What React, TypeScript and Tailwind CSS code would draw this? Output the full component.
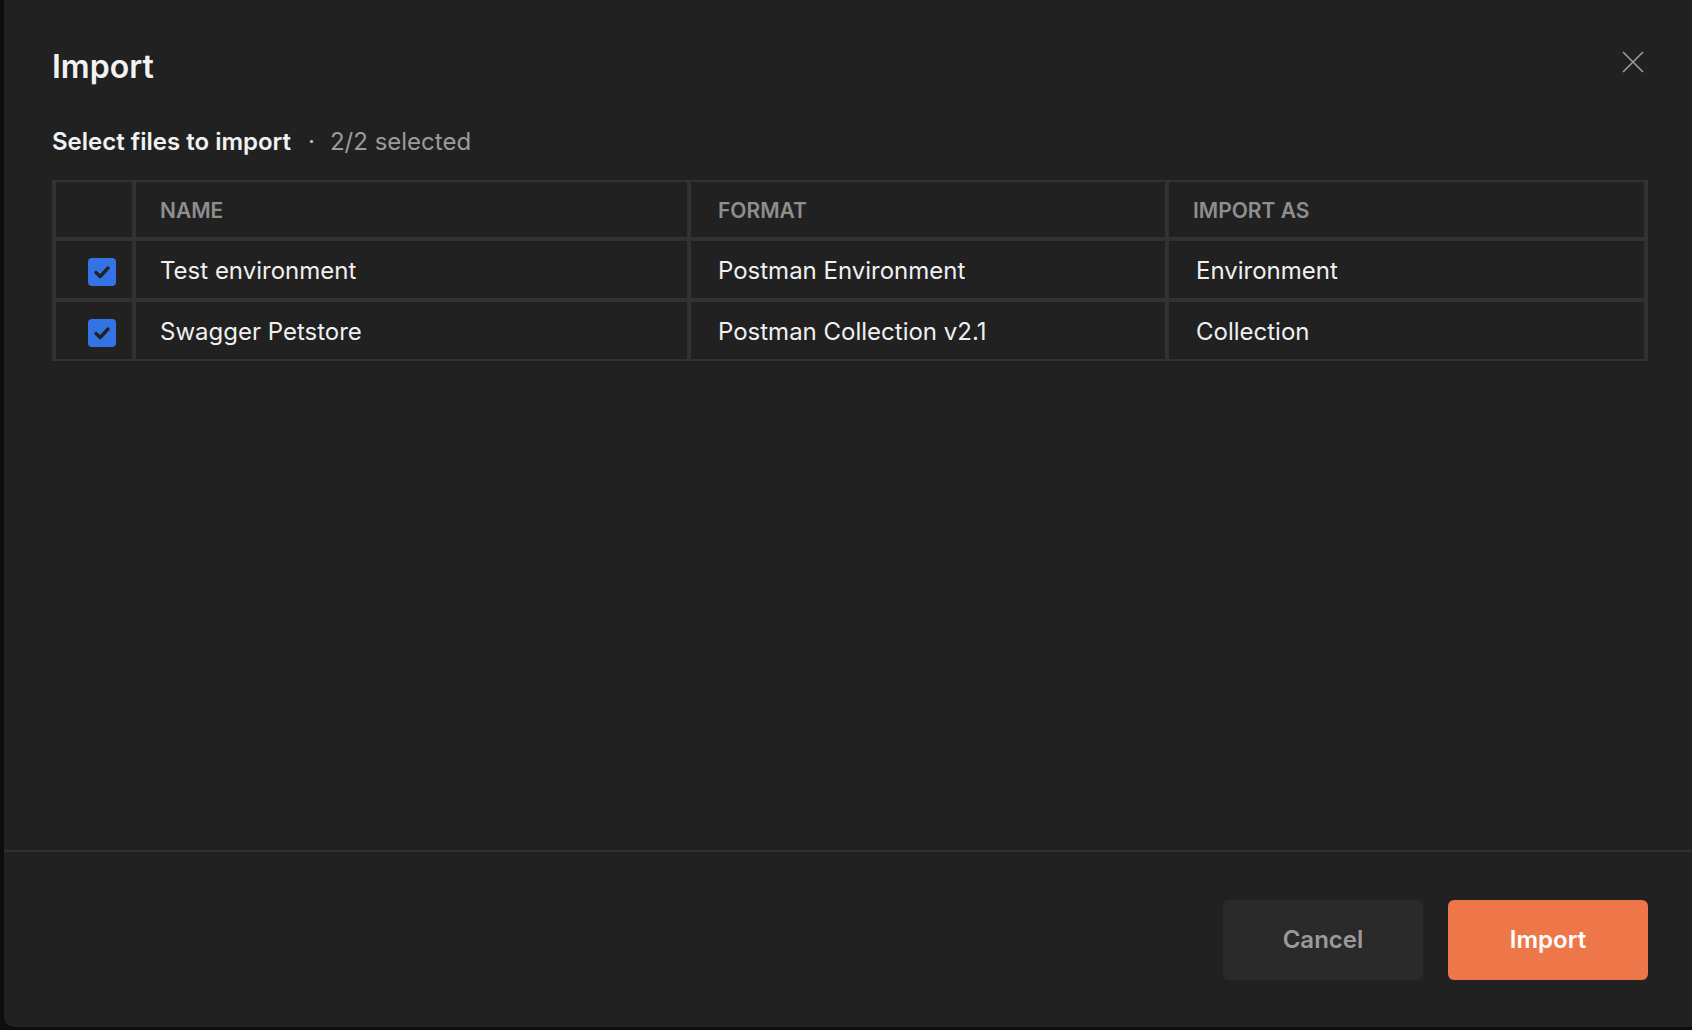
import React from "react";

const FILES = [
  { name: "Test environment", format: "Postman Environment", importAs: "Environment" },
  { name: "Swagger Petstore", format: "Postman Collection v2.1", importAs: "Collection" },
];

function CheckBox() {
  return (
    <div className="w-[28px] h-[28px] rounded-[4px] bg-[#3473e6] flex items-center justify-center">
      <svg width="22" height="22" viewBox="0 0 22 22" fill="none">
        <path
          d="M5 11.5 L9.2 15.5 L17 7"
          stroke="#222222"
          strokeWidth="3.4"
          strokeLinecap="round"
          strokeLinejoin="round"
        />
      </svg>
    </div>
  );
}

function CloseIcon() {
  return (
    <svg width="22" height="22" viewBox="0 0 22 22" fill="none">
      <path d="M1 1 L21 21 M21 1 L1 21" stroke="#9c9c9c" strokeWidth="1.6" />
    </svg>
  );
}

export default function App() {
  return (
    <div
      className="w-full h-[1030px] bg-[#0d0d0d] overflow-hidden"
      style={{ fontFamily: "Inter, 'Noto Sans', sans-serif" }}
    >
      <div className="ml-[4px] h-[1027px] bg-[#212121] rounded-bl-[10px] flex flex-col">
        {/* Body */}
        <div className="flex-1 pl-[48px] pr-[44px] pt-[47px]">
          <div className="flex items-start justify-between">
            <h1 className="text-[32px] leading-[40px] font-semibold text-[#f2f2f2]">Import</h1>
            <button className="mt-[4px] mr-[4px]" aria-label="Close">
              <CloseIcon />
            </button>
          </div>

          <div className="mt-[39px] flex items-center text-[24px] leading-[32px]">
            <span className="font-semibold text-[#f2f2f2]">Select files to import</span>
            <span className="ml-[17px] mr-[15px] text-[#bdbdbd]">·</span>
            <span className="text-[#9b9b9b]">2/2 selected</span>
          </div>

          {/* Table */}
          <div className="mt-[22px] bg-[#323232] px-[4px] py-[2px] grid grid-cols-[76px_551px_474px_1fr] gap-[4px]">
            <div className="bg-[#212121] h-[55px]" />
            <div className="bg-[#212121] h-[55px] pl-[24px] pt-[2px] flex items-center text-[21px] font-semibold text-[#8e8e8e]">
              NAME
            </div>
            <div className="bg-[#212121] h-[55px] pl-[27px] pt-[2px] flex items-center text-[21px] font-semibold text-[#8e8e8e]">
              FORMAT
            </div>
            <div className="bg-[#212121] h-[55px] pl-[24px] pt-[2px] flex items-center text-[21px] font-semibold text-[#8e8e8e]">
              IMPORT AS
            </div>

            {FILES.map((f) => (
              <React.Fragment key={f.name}>
                <div className="bg-[#212121] h-[57px] pl-[32px] pt-[4px] flex items-center">
                  <CheckBox />
                </div>
                <div className="bg-[#212121] h-[57px] pl-[24px] pt-[3px] flex items-center text-[24px] text-[#f0f0f0]">
                  {f.name}
                </div>
                <div className="bg-[#212121] h-[57px] pl-[27px] pt-[3px] flex items-center text-[24px] text-[#f0f0f0]">
                  {f.format}
                </div>
                <div className="bg-[#212121] h-[57px] pl-[27px] pt-[3px] flex items-center text-[24px] text-[#f0f0f0]">
                  {f.importAs}
                </div>
              </React.Fragment>
            ))}
          </div>
        </div>

        {/* Footer */}
        <div className="border-t-2 border-[#303030] pt-[48px] pb-[47px] pr-[44px] flex justify-end gap-[25px]">
          <button className="w-[200px] h-[80px] rounded-[6px] bg-[#2a2a2a] text-[24px] font-semibold text-[#9a9a9a]">
            Cancel
          </button>
          <button className="w-[200px] h-[80px] rounded-[6px] bg-[#ee774a] text-[24px] font-semibold text-white">
            Import
          </button>
        </div>
      </div>
    </div>
  );
}
